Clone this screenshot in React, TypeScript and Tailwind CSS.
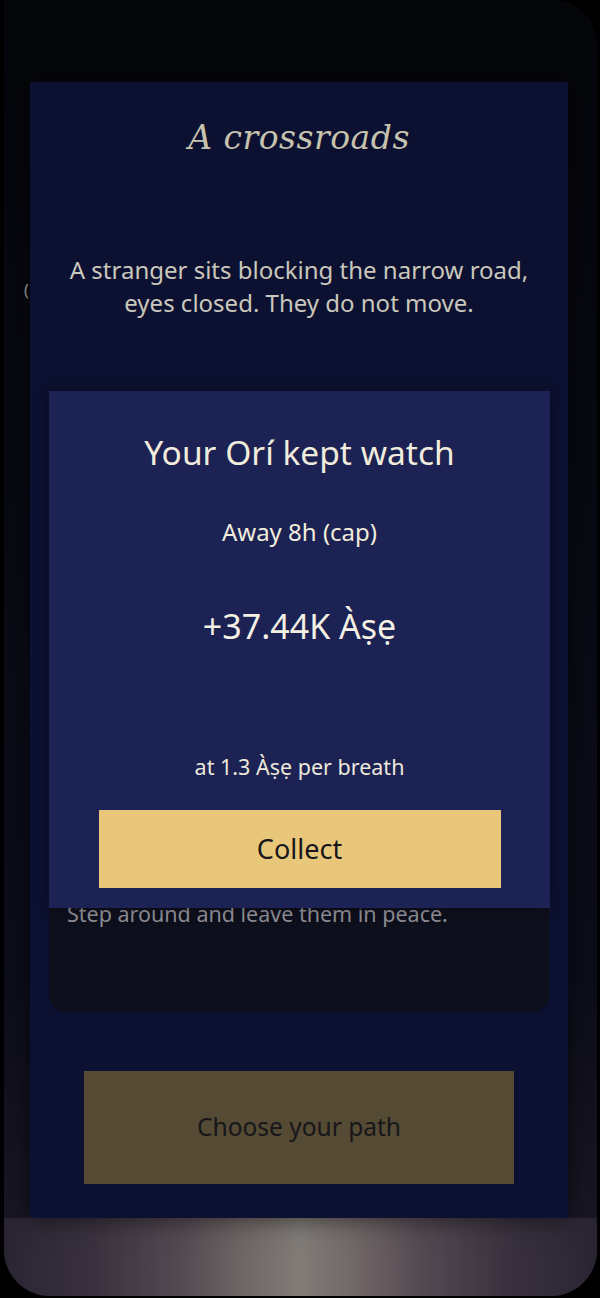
import React from "react";

const sans = { fontFamily: '"Noto Sans", "Open Sans", sans-serif' };

export default function App() {
  return (
    <div className="w-[600px] h-[1298px] bg-black overflow-hidden" style={sans}>
      {/* device frame */}
      <div className="ml-1 w-[593px] h-[1296px] rounded-tr-[44px] rounded-b-[46px] overflow-hidden flex flex-col bg-[linear-gradient(180deg,#05060a_0%,#080a13_40%,#0c0d1a_75%,#1c1926_100%)]">
        <div className="h-[82px] shrink-0" />
        <div className="flex pl-[26px] pr-[29px]">
          {/* scene panel */}
          <div className="relative w-[538px] h-[1136px] bg-[#0c1131] flex flex-col shadow-[0_0_24px_rgba(0,0,0,0.6)]">
            <span className="absolute left-[-6px] top-[198px] text-[16px] leading-[20px] text-[#8c8a88]">(</span>
            <h1
              className="pt-[36px] text-center text-[33px] leading-[40px] italic text-[#c6c2ae] tracking-[0.5px]"
              style={{ fontFamily: '"DejaVu Serif", "Liberation Serif", serif' }}
            >
              A crossroads
            </h1>
            <p className="mt-[95px] mx-auto w-[490px] text-center text-[24px] leading-[33px] text-[#cac7bc]">
              A stranger sits blocking the narrow road, eyes closed. They do not move.
            </p>
            {/* choices card */}
            <div className="mt-[80px] mx-[19px] h-[613px] rounded-b-[16px] bg-[#0e0f1c] flex flex-col justify-end px-[18px] pb-[84px]">
              <p className="text-[21.5px] leading-[28px] text-[#8d8d94]">Step around and leave them in peace.</p>
            </div>
            <div className="mt-[59px] mx-auto w-[430px] h-[113px] bg-[#554a33] flex items-center justify-center">
              <span className="text-[24.5px] text-[#16161b]">Choose your path</span>
            </div>

            {/* offline earnings dialog */}
            <div className="absolute left-[19px] top-[309px] w-[501px] h-[517px] bg-[#1c2254] flex flex-col items-center shadow-[0_0_12px_rgba(0,0,0,0.35)]">
              <h2 className="mt-[41px] text-[33.5px] leading-[40px] text-[#f1ecdc]">Your Orí kept watch</h2>
              <p className="mt-[46px] text-[24px] leading-[28px] text-[#f1ecdc]">Away 8h (cap)</p>
              <p className="mt-[60px] text-[34px] leading-[40px] text-[#f4f0e4]">+37.44K Àṣẹ</p>
              <p className="mt-[108px] text-[21.5px] leading-[26px] text-[#ece8da]">at 1.3 Àṣẹ per breath</p>
              <button className="mt-[30px] w-[402px] h-[78px] bg-[#e8c67a] flex items-center justify-center">
                <span className="text-[27px] text-[#17161a]">Collect</span>
              </button>
            </div>
          </div>
        </div>
        {/* lower glow */}
        <div className="flex-1 bg-[linear-gradient(90deg,#2a2432_0%,#3a313f_15%,#544a52_30%,#6e6565_40%,#817c78_50%,#6f6566_60%,#544a52_70%,#3a313f_85%,#2a2432_100%)]" />
      </div>
    </div>
  );
}
